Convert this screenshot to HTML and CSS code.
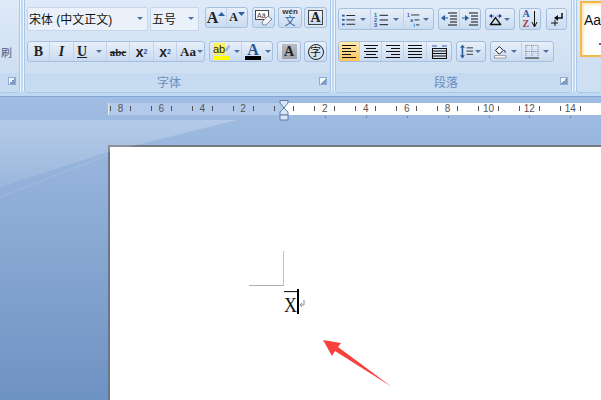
FILE: index.html
```html
<!DOCTYPE html>
<html lang="zh-CN">
<head>
    <meta charset="UTF-8">
    <title>文档</title>
    <link rel="stylesheet" href="styles.css">
</head>
<body>

<div class="ribbon">
    <!-- clipboard group, cut off by the window -->
    <div class="group group-clip">
        <div class="tools"><div class="clip-text">刷</div></div>
        <div class="group-label"><span></span><i class="launcher"></i></div>
    </div>

    <!-- font -->
    <div class="group group-font">
        <div class="tools">
            <div class="row row-top">
                <div class="combo combo-font"><span class="combo-text">宋体 (中文正文)</span><i class="caret"></i></div>
                <div class="combo combo-size"><span class="combo-text">五号</span><i class="caret"></i></div>
                <div class="btns gap-left">
                    <div class="btn w21"><span class="big-a">A</span><svg class="tiny" width="7" height="4"><path d="M0 4L3.5 0L7 4z" fill="#2f5f9f"/></svg></div>
                    <div class="btn w20"><span class="small-a">A</span><svg class="tiny" width="7" height="4"><path d="M0 0L3.5 4L7 0z" fill="#2f5f9f"/></svg></div>
                </div>
                <div class="btns gap-left w23">
                    <svg width="19" height="18" viewBox="0 0 19 18"><rect x="1.5" y="1.5" width="13" height="9" fill="#fff" stroke="#444"/><text x="3" y="9" class="svg-small">Aä</text><path d="M8 13L14 7L18 10L12 16L9 16z" fill="#f3f3f8" stroke="#7a84a0"/></svg>
                </div>
                <div class="btns gap-small w24">
                    <div class="wen"><span class="wen-top">wén</span><span class="wen-bottom">文</span></div>
                </div>
                <div class="btns gap-tiny w23 boxed"><span class="boxed-a">A</span></div>
            </div>
            <div class="row">
                <div class="btns">
                    <div class="btn w22 serif-b">B</div>
                    <div class="btn w24 serif-i">I</div>
                    <div class="btn w33 split"><span class="serif-u">U</span><i class="caret"></i></div>
                    <div class="btn w23 strike">abc</div>
                    <div class="btn w24 script">x<sub>2</sub></div>
                    <div class="btn w23 script">x<sup>2</sup></div>
                    <div class="btn w27 split"><span class="serif-aa">Aa</span><i class="caret"></i></div>
                </div>
                <div class="btns gap-left">
                    <div class="btn w32 split">
                        <div class="marker"><span class="marker-text">ab</span><svg width="8" height="10" viewBox="0 0 8 10"><path d="M1 9L6 1L8 2L3 9z" fill="#dfe6f3" stroke="#5a6f96"/></svg></div>
                        <i class="caret"></i>
                    </div>
                    <div class="btn w30 split">
                        <div class="color-a"><span>A</span><b></b></div>
                        <i class="caret"></i>
                    </div>
                </div>
                <div class="btns gap-left w24 shaded"><span class="shaded-a">A</span></div>
                <div class="btns gap-small w23 circled"><span>字</span></div>
            </div>
        </div>
        <div class="group-label"><span>字体</span><i class="launcher"></i></div>
    </div>

    <!-- paragraph -->
    <div class="group group-para">
        <div class="tools">
            <div class="row row-top-para">
                <div class="btns">
                    <div class="btn w32 split">
                        <svg width="16" height="14" viewBox="0 0 16 14"><path d="M0 2h3v2H0zM0 7h3v2H0zM0 12h3v2H0z" fill="#2c5a9c"/><path d="M5 3h10M5 8h10M5 13h10" stroke="#111"/></svg>
                        <i class="caret"></i>
                    </div>
                    <div class="btn w33 split">
                        <svg width="16" height="15" viewBox="0 0 16 15"><text x="0" y="5" class="svg-num">1</text><text x="0" y="10" class="svg-num">2</text><text x="0" y="15" class="svg-num">3</text><path d="M6 3h9M6 8h9M6 13h9" stroke="#111"/></svg>
                        <i class="caret"></i>
                    </div>
                    <div class="btn w29 split">
                        <svg width="17" height="17" viewBox="0 0 17 17"><text x="0" y="5" class="svg-num">1</text><text x="4" y="11" class="svg-num">a</text><text x="8" y="17" class="svg-num">i</text><path d="M5 3h10M9 9h6M11 15h4" stroke="#111"/></svg>
                        <i class="caret small-gap"></i>
                    </div>
                </div>
                <div class="btns gap-left">
                    <div class="btn w21">
                        <svg width="16" height="14" viewBox="0 0 16 14"><path d="M0 6L4 3V9z" fill="#2c5a9c"/><path d="M4 6h3" stroke="#2c5a9c"/><path d="M7 1h9M9 4h7M9 7h7M9 10h7M7 13h9" stroke="#111"/></svg>
                    </div>
                    <div class="btn w20">
                        <svg width="16" height="14" viewBox="0 0 16 14"><path d="M7 6L3 3V9z" fill="#2c5a9c"/><path d="M0 6h3" stroke="#2c5a9c"/><path d="M7 1h9M9 4h7M9 7h7M9 10h7M7 13h9" stroke="#111"/></svg>
                    </div>
                </div>
                <div class="btns gap-left">
                    <div class="btn w28 split">
                        <svg width="17" height="15" viewBox="0 0 17 15"><path d="M2 14L8.5 5L15 14M1 14h15" fill="none" stroke="#111" stroke-width="1.8"/><path d="M0 3L4 0V6zM17 3L13 0V6z" fill="#1f3f8f"/><path d="M4 3h3M10 3h3" stroke="#1f3f8f"/></svg>
                        <i class="caret small-gap"></i>
                    </div>
                </div>
                <div class="btns gap-left w22">
                    <div class="sort"><div class="sort-text"><span class="sort-a">A</span><span class="sort-z">Z</span></div><svg width="7" height="17" viewBox="0 0 7 17"><path d="M3.5 0V15M1 11L3.5 16L6 11" fill="none" stroke="#111"/></svg></div>
                </div>
                <div class="btns gap-wide w21">
                    <svg width="13" height="15" viewBox="0 0 13 15"><path d="M12 1V6H6" fill="none" stroke="#111" stroke-width="1.5"/><path d="M8 3L4 6L8 9z" fill="#111"/><path d="M1 11H8M5 8v6" stroke="#111"/></svg>
                </div>
            </div>
            <div class="row">
                <div class="btns">
                    <div class="btn w21 active"><svg width="14" height="13" viewBox="0 0 14 13"><path d="M0 .5h14M0 3.5h9M0 6.5h14M0 9.5h9M0 12.5h14" stroke="#111"/></svg></div>
                    <div class="btn w22"><svg width="14" height="13" viewBox="0 0 14 13"><path d="M0 .5h14M2 3.5h10M0 6.5h14M2 9.5h10M0 12.5h14" stroke="#111"/></svg></div>
                    <div class="btn w22"><svg width="14" height="13" viewBox="0 0 14 13"><path d="M0 .5h14M5 3.5h9M0 6.5h14M5 9.5h9M0 12.5h14" stroke="#111"/></svg></div>
                    <div class="btn w23"><svg width="14" height="13" viewBox="0 0 14 13"><path d="M0 .5h14M0 3.5h14M0 6.5h14M0 9.5h14M0 12.5h14" stroke="#111"/></svg></div>
                    <div class="btn w24"><svg width="15" height="14" viewBox="0 0 15 14"><path d="M0 1h5M10 1h5" stroke="#2c5a9c"/><path d="M1 3.5h13M1 6h13M1 8.5h13M1 11h13M1 13.5h13M.5 3v11M14.5 3v11" stroke="#111"/></svg></div>
                </div>
                <div class="btns gap-left">
                    <div class="btn w28 split">
                        <svg width="16" height="17" viewBox="0 0 16 17"><path d="M3 0L6 4H4V13H6L3 17L0 13H2V4H0z" fill="#2c5a9c"/><path d="M8 4h8M8 8h8M8 12h8" stroke="#111"/></svg>
                        <i class="caret small-gap"></i>
                    </div>
                </div>
                <div class="btns gap-left">
                    <div class="btn w31 split">
                        <svg width="17" height="17" viewBox="0 0 17 17"><path d="M2 7L7 2L12 7L7 12z" fill="#fff" stroke="#111" stroke-width="1.3"/><path d="M13 6c2 1 3 3 2 5c-1-1-2-2-2-5z" fill="#2c5a9c"/><rect x=".5" y="14" width="15" height="3" fill="#fff" stroke="#888"/></svg>
                        <i class="caret"></i>
                    </div>
                    <div class="btn w31 split">
                        <svg width="15" height="15" viewBox="0 0 15 15"><path d="M.5 1h14M.5 7.5h14M1 1v12M7.5 1v12M14 1v12" fill="none" stroke="#777" stroke-dasharray="1 1"/><path d="M0 14.5h15" stroke="#111"/></svg>
                        <i class="caret"></i>
                    </div>
                </div>
            </div>
        </div>
        <div class="group-label"><span>段落</span><i class="launcher"></i></div>
    </div>

    <!-- styles -->
    <div class="group group-style">
        <div class="style-card"><span>Aa</span><i class="style-dot"></i></div>
    </div>
</div>

<div class="workspace">
    <svg class="wedge" width="240" height="110" viewBox="0 0 240 110">
        <defs>
            <linearGradient id="wedgeFill" x1="0" y1="0" x2="0" y2="1">
                <stop offset="0" stop-color="#fff" stop-opacity=".24"/>
                <stop offset="1" stop-color="#fff" stop-opacity=".08"/>
            </linearGradient>
        </defs>
        <path d="M0 23H237L108 55L0 90z" fill="url(#wedgeFill)"/>
        <path d="M0 100L108 58" stroke="#fff" stroke-opacity=".14" fill="none"/>
    </svg>

    <div class="ruler">
        <span>8</span><span>6</span><span>4</span><span>2</span><span></span><span>2</span><span>4</span><span>6</span><span>8</span><span>10</span><span>12</span><span>14</span>
    </div>
    <div class="tab-stops">
        <i></i><i></i><i></i><i></i><i></i><i></i><i></i>
    </div>

    <div class="page">
        <div class="crop-mark"></div>
        <div class="text-line">
            <span class="typed">X</span>
            <i class="cursor"></i>
            <svg class="return-mark" width="6" height="9" viewBox="0 0 6 9"><path d="M5 0V5H1M3 3L1 5L3 7" fill="none" stroke="#8f8f8f"/></svg>
        </div>
    </div>

    <!-- indent marker on the ruler -->
    <svg class="indent-marker" width="10" height="21" viewBox="0 0 10 21">
        <path d="M1 .5H9V3L5 8L1 3z" fill="#dbe6f5" stroke="#5f7fae"/>
        <path d="M5 8L9 12V15H1V12z" fill="#dbe6f5" stroke="#5f7fae"/>
        <rect x="1" y="15" width="8" height="5" fill="#dbe6f5" stroke="#5f7fae"/>
    </svg>

    <!-- red annotation arrow -->
    <svg class="arrow" width="80" height="60" viewBox="0 0 80 60">
        <path d="M3 3L21 6L18 10L72 50L15 14L12 19z" fill="#f8413d"/>
    </svg>
</div>

</body>
</html>
```

FILE: styles.css
```css
* {
    box-sizing: border-box;
}

body {
    margin: 0;
    width: 601px;
    height: 400px;
    overflow: hidden;
    display: flex;
    flex-direction: column;
    font-family: "Liberation Sans", "Noto Sans CJK SC", sans-serif;
    background-color: #9fbce2;
}

/* ribbon */
.ribbon {
    flex: none;
    display: flex;
    gap: 4px;
    height: 97px;
    padding-bottom: 4px;
    background-color: #bfd8f3;
    border-bottom: 1px solid #83a5d2;
    overflow: hidden;
}

.group {
    flex: none;
    display: flex;
    flex-direction: column;
    height: 93px;
    background: linear-gradient(#dfeaf8, #cfdff2 75%);
    border: 1px solid #a9c8e8;
    border-top: none;
    border-radius: 0 0 3px 3px;
    box-shadow: 1px 0 0 #eef5fc, -1px 0 0 #eef5fc;
}

.group-clip {
    width: 21px;
    margin-left: -1px;
}

.group-font {
    width: 307px;
}

.group-para {
    width: 237px;
}

.group-style {
    flex: 1;
    min-width: 0;
    padding: 1px 0 0 3px;
    border-right: none;
}

.tools {
    height: 73px;
    padding-top: 7px;
}

.group-font .tools {
    padding-left: 2px;
}

.group-para .tools {
    padding-left: 2px;
}

.group-label {
    height: 19px;
    padding: 0 15px 2px 0;
    display: flex;
    align-items: center;
    justify-content: center;
    position: relative;
    background: linear-gradient(#c5d9f0, #c9dcf2);
    font-size: 12px;
    color: #6a8fbd;
}

.group-font .group-label {
    padding-right: 17px;
}

.launcher {
    position: absolute;
    right: 3px;
    top: 4px;
    width: 8px;
    height: 8px;
    border: 1px solid #8fabcf;
    background: linear-gradient(135deg, #f0f5fb 50%, #7d9ac2 50%);
}

.clip-text {
    padding: 37px 0 0 1px;
    font-size: 11px;
    color: #3d5f8e;
}

/* rows and buttons */
.row {
    display: flex;
    align-items: flex-start;
}

.row-top {
    height: 34px;
}

.row-top-para {
    height: 33px;
    margin-top: 1px;
}

.combo {
    display: flex;
    align-items: center;
    justify-content: space-between;
    height: 24px;
    margin-right: 2px;
    padding: 0 4px 2px 1px;
    background-color: #eaf1fb;
    border: 1px solid #c3d6ec;
    border-radius: 2px;
    font-size: 12px;
    color: #111;
}

.combo-font {
    width: 121px;
}

.combo-size {
    width: 49px;
}

.combo-text {
    white-space: nowrap;
}

.caret {
    flex: none;
    width: 0;
    height: 0;
    border-left: 3px solid transparent;
    border-right: 3px solid transparent;
    border-top: 3px solid #50709f;
}

.small-gap {
    margin-left: -2px;
}

.btns {
    flex: none;
    display: flex;
    align-items: center;
    justify-content: center;
    height: 21px;
    background: linear-gradient(#e7eff9, #c9dbf1);
    border: 1px solid #a5bfdf;
    border-radius: 3px;
}

.row-top-para .btns {
    height: 22px;
}

.gap-left {
    margin-left: 4px;
}

.gap-small {
    margin-left: 3px;
}

.gap-tiny {
    margin-left: 2px;
}

.gap-wide {
    margin-left: 5px;
}

.btn {
    flex: none;
    height: 100%;
    display: flex;
    align-items: center;
    justify-content: center;
    gap: 4px;
    border-right: 1px solid #c0d2e9;
}

.btn:last-child {
    border-right: none;
}

.split {
    justify-content: space-between;
    padding: 0 4px 0 3px;
}

.w20 { width: 20px; }
.w21 { width: 21px; }
.w22 { width: 22px; }
.w23 { width: 23px; }
.w24 { width: 24px; }
.w27 { width: 27px; }
.w28 { width: 28px; }
.w29 { width: 29px; }
.w30 { width: 30px; }
.w31 { width: 31px; }
.w32 { width: 32px; }
.w33 { width: 33px; }

.active {
    background: linear-gradient(#ffe9a8, #fdc25f);
    border-radius: 2px 0 0 2px;
}

/* font buttons */
.big-a, .small-a, .boxed-a, .shaded-a, .serif-b, .serif-i, .serif-u, .serif-aa, .strike, .script {
    font-family: "Liberation Serif", serif;
    font-weight: bold;
    color: #222;
}

.big-a {
    font-size: 16px;
}

.small-a {
    font-size: 12px;
}

.tiny {
    margin: -8px 0 0 -4px;
}

.serif-b {
    font-size: 14px;
}

.serif-i {
    font-size: 14px;
    font-style: italic;
}

.serif-u {
    font-size: 14px;
    text-decoration: underline;
}

.serif-aa {
    font-size: 13px;
    margin-right: -3px;
}

.strike {
    font-size: 11px;
    text-decoration: line-through;
}

.script {
    gap: 0;
    font-family: "Liberation Sans", sans-serif;
    font-size: 14px;
}

.script sub, .script sup {
    font-size: 7px;
    color: #2c5a9c;
    line-height: 0;
}

.svg-small {
    font-size: 7px;
    font-family: "Liberation Sans", sans-serif;
    fill: #333;
}

.svg-num {
    font-size: 6px;
    font-weight: bold;
    font-family: "Liberation Sans", sans-serif;
    fill: #2c5a9c;
}

.wen {
    display: flex;
    flex-direction: column;
    align-items: center;
    line-height: 1;
}

.wen-top {
    font-size: 8px;
    font-weight: bold;
    color: #333;
    height: 8px;
}

.wen-bottom {
    font-size: 11px;
    color: #2c5a9c;
}

.boxed {
    background: #dbe6f4;
}

.boxed-a {
    width: 15px;
    height: 15px;
    text-align: center;
    font-size: 14px;
    line-height: 14px;
    border: 1px solid #444;
    background: linear-gradient(#eef3fa, #cddcf0);
}

.marker {
    width: 17px;
    height: 17px;
    display: flex;
    align-items: flex-start;
    border-bottom: 4px solid #ffff00;
}

.marker-text {
    font-size: 11px;
    line-height: 12px;
    background: #ffef5a;
    color: #222;
}

.color-a {
    display: flex;
    flex-direction: column;
    align-items: center;
    width: 16px;
}

.color-a span {
    font-family: "Liberation Serif", serif;
    font-weight: bold;
    font-size: 16px;
    line-height: 13px;
    color: #24508f;
}

.color-a b {
    width: 16px;
    height: 4px;
    background: #000;
}

.shaded-a {
    width: 15px;
    height: 15px;
    text-align: center;
    font-size: 14px;
    line-height: 15px;
    background: linear-gradient(#b9bcc0, #9ea3aa);
}

.circled span {
    width: 16px;
    height: 16px;
    border: 1px solid #222;
    border-radius: 50%;
    font-size: 11px;
    line-height: 14px;
    text-align: center;
    color: #111;
}

.sort {
    display: flex;
    gap: 1px;
    align-items: center;
}

.sort-text {
    display: flex;
    flex-direction: column;
    font-family: "Liberation Serif", serif;
    font-size: 10px;
    font-weight: bold;
    line-height: 10px;
}

.sort-a {
    color: #2c5a9c;
}

.sort-z {
    color: #a23c3c;
}

.style-card {
    width: 100%;
    height: 56px;
    padding: 9px 0 0 2px;
    background: #fff;
    border: 2px solid #f3b84f;
    border-right: none;
    box-shadow: inset 2px 2px 2px #ffe9bd;
    font-size: 14px;
    color: #111;
    position: relative;
}

.style-dot {
    position: absolute;
    right: 0;
    bottom: 10px;
    width: 2px;
    height: 2px;
    background: #9a4a8a;
}

/* workspace below the ribbon */
.workspace {
    flex: 1;
    position: relative;
    display: flex;
    flex-direction: column;
    padding-top: 6px;
    background: linear-gradient(#a1bde3, #6e92c2);
}

.wedge {
    position: absolute;
    left: 0;
    top: 0;
}

.ruler {
    flex: none;
    display: flex;
    height: 12px;
    margin-left: 108px;
    overflow: hidden;
    background: linear-gradient(90deg, #b4caea 175px, #fff 175px);
    border-left: 1px solid #dce6f4;
    font-size: 10px;
    color: #555;
}

.ruler span {
    position: relative;
    flex: none;
    width: 40.9px;
    text-align: center;
    line-height: 12px;
}

.ruler span:first-child {
    margin-left: -9px;
}

/* half unit ticks either side of a number */
.ruler span::before,
.ruler span::after {
    content: "";
    position: absolute;
    top: 3px;
    width: 1px;
    height: 5px;
    background: #555;
}

.ruler span::before {
    left: 10px;
}

.ruler span::after {
    right: 10px;
}

.tab-stops {
    flex: none;
    display: flex;
    height: 2px;
    margin: 1px 0 0 325px;
    gap: 39.9px;
}

.tab-stops i {
    width: 1px;
    height: 2px;
    background: #6b7f9f;
}

.page {
    flex: 1;
    margin: 27px 0 0 108px;
    background: #fff;
    border-top: 2px solid #777a82;
    border-left: 2px solid #6d7686;
}

.crop-mark {
    width: 35px;
    height: 35px;
    margin: 104px 0 0 139px;
    border-right: 1px solid #c2c2c2;
    border-bottom: 1px solid #b0b0b0;
}

.text-line {
    display: flex;
    align-items: flex-start;
    margin: 5px 0 0 174px;
}

.typed {
    width: 13px;
    height: 23px;
    border-top: 1px solid #222;
    font-family: "Liberation Serif", serif;
    font-size: 18px;
    line-height: 23px;
    color: #111;
    text-align: center;
    transform: scaleY(1.15);
    transform-origin: top;
}

.cursor {
    width: 2px;
    height: 25px;
    margin-top: -2px;
    background: #000;
}

.return-mark {
    margin-top: 9px;
}

.indent-marker {
    position: absolute;
    left: 279px;
    top: 3px;
}

.arrow {
    position: absolute;
    left: 320px;
    top: 240px;
}
```
